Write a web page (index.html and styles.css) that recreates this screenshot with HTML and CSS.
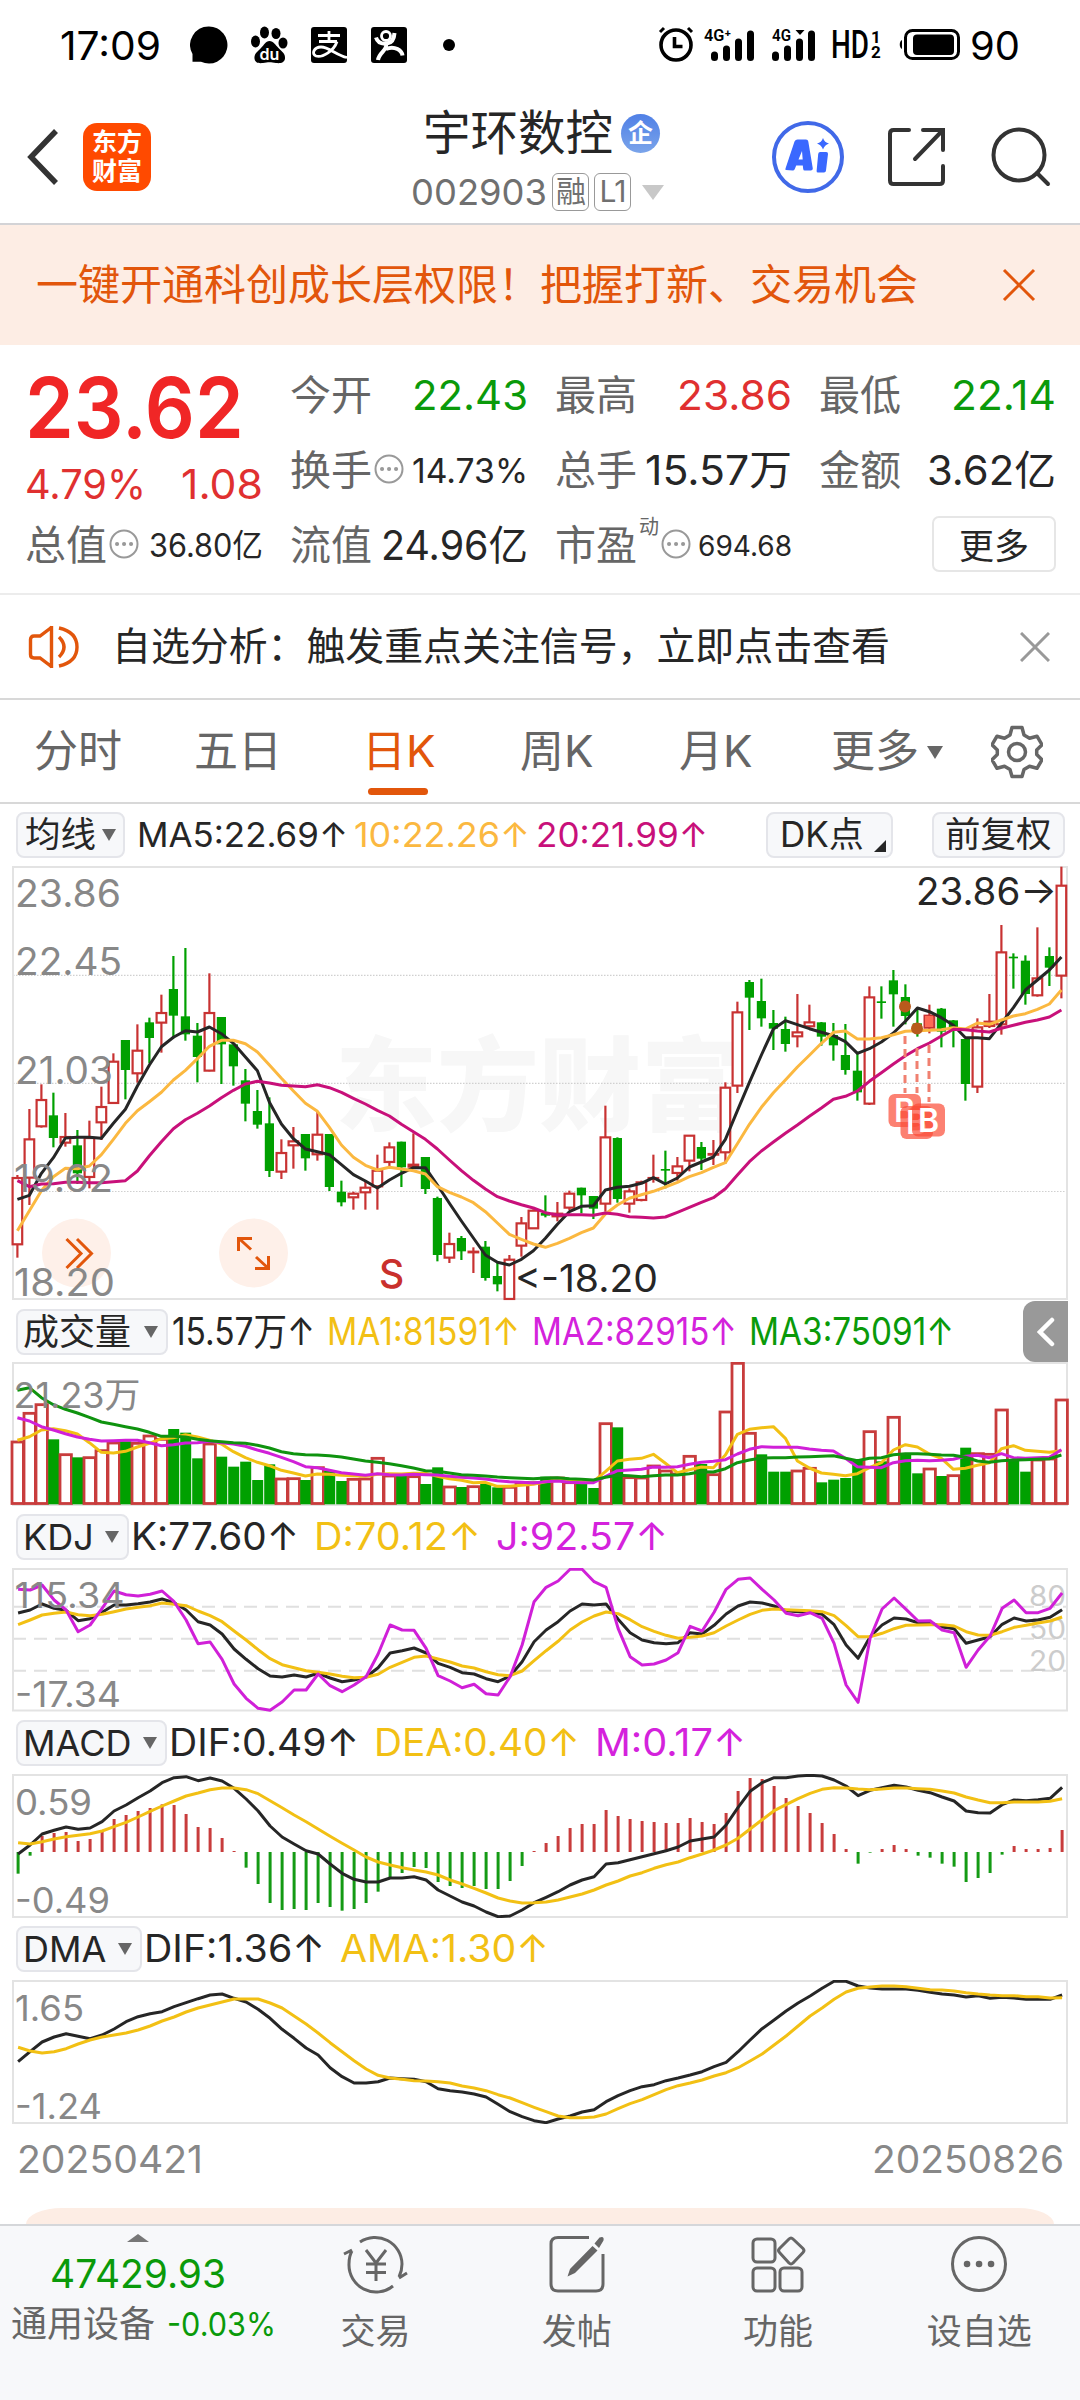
FILE: index.html
```html
<!DOCTYPE html>
<html lang="zh-CN">
<head>
<meta charset="utf-8">
<title>宇环数控 002903</title>
<link rel="stylesheet" href="styles.css">
</head>
<body>
<div class="status">
  <span class="status-time" data-fit="101">17:09</span>
  <div class="status-apps">
    <svg width="38" height="38" viewBox="0 0 38 38"><path d="M19 .5a18.5 18.5 0 1 1-8 35.200H2.500V28A18.500 18.500 0 0 1 19 .5z"/></svg>
    <svg width="38" height="38" viewBox="0 0 38 38"><ellipse cx="5.500" cy="15.500" rx="4.500" ry="6"/><ellipse cx="14.500" cy="6.500" rx="4.500" ry="6"/><ellipse cx="26" cy="7.500" rx="4.500" ry="5.500"/><ellipse cx="33" cy="17" rx="4.500" ry="5.500"/><path d="M19.500 15c4 0 6 4 9 7 4 4 7 6 6.500 10.500-.5 4.500-5 5-9 4.500-5-1-8-1-13 0-4 .5-8 0-8.500-4.500S7 26 11 22c3-3 4.500-7 8.500-7z"/><text class="paw-text" x="19.500" y="34" text-anchor="middle">du</text></svg>
    <svg width="38" height="38" viewBox="0 0 38 38"><rect x="1" y="1" width="36" height="36" rx="3"/><path class="knock" d="M8 9.500h22M19 5v10M9 15.500h18M27 15.500C24 25 12 32 6 30c-5-2-2-9 5-9 8 0 15 8 26 10.500"/></svg>
    <svg width="38" height="38" viewBox="0 0 38 38"><rect x="1" y="1" width="36" height="36" rx="3"/><circle class="knock" cx="16" cy="10" r="4.500"/><path class="knock wide" d="M6 11.500C8 18 13 18 17 17.500s7-3 7.500-10.500M16 18c2 6-7 8-8 16M16 23c9-4 16 2 16.500 6.500"/></svg>
  </div>
  <i class="status-dot"></i>
  <div class="status-right">
    <svg class="st-alarm" width="36" height="38" viewBox="0 0 36 38"><circle cx="18" cy="19" r="15"/><path d="M16.500 11v9.500h8"/><path class="thin" d="M2 6l4-4M34 6l-4-4"/></svg>
    <svg width="54" height="36" viewBox="0 0 54 36"><text class="net" x="0" y="14" textLength="27" lengthAdjust="spacingAndGlyphs">4G⁺</text><path class="bars" d="M10.500 28v2.500M22.500 22v8.500M34.500 15v15.500M46.500 7v23.500"/></svg>
    <svg width="48" height="36" viewBox="0 0 48 36"><text class="net" x="0" y="14" textLength="19" lengthAdjust="spacingAndGlyphs">4G</text><path class="bars" d="M3.500 28v2.500M15.500 22v8.500M27.500 15v15.500M39.500 7v23.500"/><path d="M23.500 3h9l-4.500 5z"/></svg>
    <span class="hd" data-fit="38">HD</span>
    <span class="hd-sub"><b>1</b><b>2</b></span>
    <svg class="st-battery" width="62" height="32" viewBox="0 0 62 32"><rect class="line" x="6.500" y="1.500" width="53" height="28" rx="7"/><rect x="14" y="5.500" width="41" height="20.500" rx="4"/><path d="M3 11v9C0 19 0 12 3 11z"/></svg>
    <span class="status-time" data-fit="50">90</span>
  </div>
</div>

<header class="head">
  <div class="head-left">
    <svg width="34" height="60" viewBox="0 0 34 60"><path d="M30 4L5 30l25 26" fill="none" stroke="#333" stroke-width="5.500"/></svg>
    <div class="logo"><span>东方</span><span>财富</span></div>
  </div>
  <div class="head-title">
    <div class="name">宇环数控<span class="qi">企</span></div>
    <div class="code"><span data-fit="136">002903</span><em>融</em><em>L1</em><svg width="22" height="15" viewBox="0 0 22 15"><path d="M0 0h22L11 15z" fill="#c8c8c8"/></svg></div>
  </div>
  <div class="head-right">
    <svg width="74" height="74" viewBox="0 0 74 74"><circle cx="37" cy="37" r="34" fill="none" stroke="#4169e8" stroke-width="4"/><path fill="#3a68ff" fill-rule="evenodd" d="M15 50q-1 0-.5-1.500l9-27q1-2 3-2h8.500q2 0 2.300 2l4.500 27q0 2-2 2h-6q-1.500 0-1.600-1.500l-.4-3.500h-6.600l-1.400 3.500q-.6 1.500-2 1.500zM27.500 39.500h4.200l-.7-8.500zM47 52.500q-1.500 0-1.400-1.500l1.600-17q.2-2 2-2h6q2 0 1.800 2l-2 16.500q-.2 2-2 2zM52 18q1.500 4.500 6 5.500-4.500 1.500-6 6-1.500-4.500-6-6 4.500-1 6-5.500z"/></svg>
    <svg width="60" height="60" viewBox="0 0 60 60"><path d="M22 3H6.500Q3 3 3 6.500v47Q3 57 6.500 57h46q3.500 0 3.500-3.500V39M36 3h20v20M55 4L28 32" fill="none" stroke="#333" stroke-width="4" stroke-linecap="round"/></svg>
    <svg width="62" height="62" viewBox="0 0 62 62"><circle cx="30" cy="29" r="25.500" fill="none" stroke="#333" stroke-width="4"/><path d="M48 47l11 11" stroke="#333" stroke-width="4" stroke-linecap="round"/></svg>
  </div>
</header>

<div class="banner"><span>一键开通科创成长层权限！把握打新、交易机会</span><svg width="34" height="34" viewBox="0 0 34 34"><path d="M2 2l30 30M32 2L2 32" stroke="#e2560b" stroke-width="3"/></svg></div>

<section class="quote">
  <div class="price">
    <span class="last" data-fit="222">23.62</span>
    <div class="chg"><span data-fit="121">4.79%</span><span data-fit="82">1.08</span></div>
  </div>
  <div class="cell"><label>今开</label><span class="green" data-fit="116">22.43</span></div>
  <div class="cell"><label>最高</label><span class="red" data-fit="115">23.86</span></div>
  <div class="cell"><label>最低</label><span class="green" data-fit="105">22.14</span></div>
  <div class="cell"><label>换手</label><svg class="tip" width="30" height="30" viewBox="0 0 30 30"><circle cx="15" cy="15" r="13.500"/><path d="M8 15h.1M15 15h.1M22 15h.1"/></svg><span class="mid" data-fit="116">14.73%</span></div>
  <div class="cell"><label>总手</label><span data-fit="147">15.57万</span></div>
  <div class="cell"><label>金额</label><span data-fit="129">3.62亿</span></div>
  <div class="cell"><label>总值</label><svg class="tip" width="30" height="30" viewBox="0 0 30 30"><circle cx="15" cy="15" r="13.500"/><path d="M8 15h.1M15 15h.1M22 15h.1"/></svg><span class="sm" data-fit="114">36.80亿</span></div>
  <div class="cell"><label>流值</label><span data-fit="147">24.96亿</span></div>
  <div class="cell"><label>市盈<sup>动</sup></label><svg class="tip" width="30" height="30" viewBox="0 0 30 30"><circle cx="15" cy="15" r="13.500"/><path d="M8 15h.1M15 15h.1M22 15h.1"/></svg><span class="xs" data-fit="94">694.68</span></div>
  <div class="cell end"><button class="more">更多</button></div>
</section>

<div class="alert">
  <svg width="52" height="46" viewBox="0 0 52 46"><path d="M23.500 2v42M24 3L12 12H6q-3.500 0-3.500 3.500v15Q2.500 34 6 34h6l12 9M31 13q10 10 0 20M31 4q18 4 18 19T31 42" fill="none" stroke="#e2560b" stroke-width="3.400"/></svg>
  <span>自选分析：触发重点关注信号，立即点击查看</span>
  <svg width="30" height="30" viewBox="0 0 30 30"><path d="M1 1l28 28M29 1L1 29" stroke="#999" stroke-width="3"/></svg>
</div>

<nav class="tabs">
  <span>分时</span><span>五日</span><span class="on">日K</span><span>周K</span><span>月K</span><span>更多<svg width="16" height="13" viewBox="0 0 16 13"><path d="M0 0h16L8 13z" fill="#666"/></svg></span>
  <svg width="52" height="54" viewBox="0 0 52 54"><path d="M21 2.500h10l2 7.500 5.500 3.200 7.500-2 5 8.500-5.300 5.300v4.500l5.300 5.300-5 8.500-7.500-2L33 44.500 31 51.500H21l-2-7-5.500-3.200-7.500 2-5-8.500L6.300 29.500V25L1 19.700l5-8.500 7.500 2L19 10z" fill="none" stroke="#666" stroke-width="3.500" stroke-linejoin="round"/><circle cx="26" cy="27" r="8.500" fill="none" stroke="#666" stroke-width="3.500"/></svg>
</nav>

<div class="ind ind-ma">
  <span class="pill">均线<i class="tri"></i></span>
  <span data-fit="211">MA5:22.69↑</span><span class="amber" data-fit="176">10:22.26↑</span><span class="rose" data-fit="172">20:21.99↑</span>
  <span class="pill dk">DK点<i class="corner"></i></span><span class="pill fq">前复权</span>
</div>
<svg class="chart" id="candle" width="1080" height="436" viewBox="0 865 1080 436"></svg>

<div class="ind ind-vol">
  <span class="pill">成交量<i class="tri"></i></span>
  <span data-fit="143">15.57万↑</span><span class="yellow" data-fit="193">MA1:81591↑</span><span class="purple" data-fit="205">MA2:82915↑</span><span class="green" data-fit="205">MA3:75091↑</span>
  <span class="fold"><svg width="18" height="30" viewBox="0 0 18 30"><path d="M15 3L3 15l12 12" fill="none" stroke="#fff" stroke-width="4.500" stroke-linecap="round"/></svg></span>
</div>
<svg class="chart" id="volume" width="1080" height="144" viewBox="0 1362 1080 144"></svg>

<div class="ind ind-kdj">
  <span class="pill">KDJ<i class="tri"></i></span>
  <span data-fit="168">K:77.60↑</span><span class="yellow" data-fit="167">D:70.12↑</span><span class="purple" data-fit="172">J:92.57↑</span>
</div>
<svg class="chart" id="kdj" width="1080" height="144" viewBox="0 1568 1080 144"></svg>

<div class="ind ind-macd">
  <span class="pill">MACD<i class="tri"></i></span>
  <span data-fit="190">DIF:0.49↑</span><span class="yellow" data-fit="206">DEA:0.40↑</span><span class="purple" data-fit="151">M:0.17↑</span>
</div>
<svg class="chart" id="macd" width="1080" height="144" viewBox="0 1774 1080 144"></svg>

<div class="ind ind-dma">
  <span class="pill">DMA<i class="tri"></i></span>
  <span data-fit="181">DIF:1.36↑</span><span class="yellow" data-fit="209">AMA:1.30↑</span>
</div>
<svg class="chart" id="dma" width="1080" height="144" viewBox="0 1980 1080 144"></svg>

<div class="dates"><span data-fit="186">20250421</span><span data-fit="192">20250826</span></div>
<div class="peek"></div>

<footer class="bottom">
  <div class="index">
    <svg width="22" height="8" viewBox="0 0 22 8"><path d="M0 8h22L11 0z" fill="#777"/></svg>
    <span class="green idx" data-fit="176">47429.93</span>
    <div class="sector">通用设备<span class="green" data-fit="109">-0.03%</span></div>
  </div>
  <div class="item"><svg width="70" height="62" viewBox="0 0 70 62"><path d="M19 9a27 27 0 0 1 42 22q0 7-3 13M52 53A27 27 0 0 1 8 31q0-8 3-13M11 17l-8 4M58 45l8-5M25 17l10 13 10-13M35 30v18M25 31h20M25 39.500h20" fill="none" stroke="#666" stroke-width="3"/></svg>交易</div>
  <div class="item"><svg width="58" height="62" viewBox="0 0 58 62"><path d="M41 4.500H10Q3 4.500 3 11v40q0 7 7 7h38q7 0 7-7V21" fill="none" stroke="#666" stroke-width="3"/><path d="M44.500 13l5 4.500L27 40l-7.500 3.500L22 36zM46.500 10.500l5-6q5-2 4 3L51 15z" fill="#666"/></svg>发帖</div>
  <div class="item"><svg width="58" height="62" viewBox="0 0 58 62"><g fill="none" stroke="#666" stroke-width="3"><rect x="4" y="6" width="22" height="23" rx="4"/><rect x="4" y="35" width="22" height="23" rx="4"/><rect x="31" y="35" width="22" height="23" rx="4"/><path d="M40 6q2-2 4 0l10 9.500q2 2 0 4L44 30q-2 2-4 0L30.500 19.500q-2-2 0-4z"/></g></svg>功能</div>
  <div class="item"><svg width="58" height="62" viewBox="0 0 58 62"><circle cx="29" cy="31" r="26.500" fill="none" stroke="#666" stroke-width="3"/><path d="M17 31h.1M29 31h.1M41 31h.1" stroke="#666" stroke-width="6.500" stroke-linecap="round"/></svg>设自选</div>
</footer>
<script src="chart.js"></script>
</body>
</html>
```
FILE: styles.css
```css
* { box-sizing: border-box; }
body {
  margin: 0;
  width: 1080px;
  height: 2400px;
  overflow: hidden;
  background: #fff;
  color: #262626;
  font-family: Inter, "Noto Sans CJK SC", sans-serif;
  font-size: 38px;
  line-height: 1;
}
svg { display: block; flex: none; }
[data-fit] { display: inline-block; white-space: nowrap; transform-origin: 0 50%; flex: none; }
.green { color: #0a9a0a; }
.red { color: #e03030; }
.amber { color: #fbb840; }
.rose { color: #c8107a; }
.yellow { color: #f2c014; }
.purple { color: #d422dc; }

.status { display: flex; align-items: center; height: 90px; padding-left: 60px; color: #000; }
.status-time { font-size: 39px; }
.status-apps { display: flex; gap: 22px; margin-left: 29px; }
.paw-text { font: 600 16px Inter, sans-serif; fill: #fff; }
.knock { fill: none; stroke: #fff; stroke-width: 2.8; }
.knock.wide { stroke-width: 4; }
.status-dot { width: 12px; height: 12px; border-radius: 50%; background: #000; margin-left: 35px; }
.status-right { display: flex; align-items: center; margin-left: 203px; }
.st-alarm { fill: none; stroke: #000; stroke-width: 3.6; margin-right: 10px; }
.st-alarm .thin { stroke-width: 3; }
.net { font: 600 16px "Roboto", sans-serif; fill: #000; }
.bars { fill: none; stroke: #000; stroke-width: 7; stroke-linecap: round; }
.status-right svg + svg + svg { margin-left: 14px; }
.hd { font: 500 38px Roboto, sans-serif; margin-left: 11px; }
.hd-sub { display: flex; flex-direction: column; font: 700 17px/15px Roboto, sans-serif; width: 10px; margin-left: 2px; }
.hd-sub b { font-weight: 700; }
.st-battery { margin: 0 0 0 18px !important; }
.st-battery .line { fill: none; stroke: #000; stroke-width: 3; }
.st-battery + .status-time { margin-left: 9px; }

.head { display: grid; grid-template-columns: 400px 280px 400px; height: 135px; border-bottom: 2px solid #d3d3d6; }
.head-left { display: flex; align-items: center; padding-left: 26px; gap: 23px; }
.logo { width: 68px; height: 68px; border-radius: 14px; background: #ff4a00; color: #fff; display: flex; flex-direction: column; align-items: center; justify-content: center; font-size: 25px; line-height: 29px; font-weight: 700; }
.head-title { display: flex; flex-direction: column; padding-top: 18px; }
.name { display: flex; align-items: center; font-size: 47.500px; line-height: 50px; padding-left: 23px; white-space: nowrap; }
.qi { width: 39px; height: 39px; border-radius: 50%; background: linear-gradient(#5080e6, #7aa4ea); color: #fff; font-size: 25px; line-height: 38px; text-align: center; font-weight: 700; margin-left: 8px; }
.code { display: flex; align-items: center; height: 38px; margin-top: 15px; padding-left: 11px; font-size: 36px; color: #707070; }
.code em { width: 37px; height: 38px; border: 1.500px solid #999; border-radius: 6px; font-style: normal; font-size: 30px; line-height: 34px; text-align: center; margin-left: 5px; letter-spacing: -1px; }
.code svg { margin-left: 11px; }
.head-right { display: flex; align-items: center; padding-left: 91px; gap: 42px; }

.banner { display: flex; align-items: center; justify-content: space-between; height: 120px; padding: 0 44px 0 36px; background: #fdede4; color: #e2560b; font-size: 42px; }

.quote { display: grid; grid-template-columns: 238px 238px 237px 237px; grid-auto-rows: 75px; column-gap: 27px; padding: 13px 24px 11px 25px; height: 250px; border-bottom: 2px solid #ececec; }
.price { grid-row: span 2; color: #f02626; display: flex; flex-direction: column; }
.last { font-size: 84px; font-weight: 600; height: 99px; line-height: 99px; }
.chg { display: flex; justify-content: space-between; font-size: 41px; line-height: 54px; color: #e03030; }
.cell { display: flex; align-items: center; font-size: 41px; }
.cell label { position: relative; font-size: 41px; color: #666; white-space: nowrap; }
.cell label sup { position: absolute; left: 84px; top: -8px; font-size: 20px; line-height: 20px; }
.cell > span { margin-left: auto; }
.cell .mid { font-size: 34px; }
.cell .sm { font-size: 32px; }
.cell .xs { font-size: 28px; }
.tip { fill: none; stroke: #999; stroke-width: 2; margin: -4px 0 0 2px; }
.tip path { stroke-width: 4; stroke-linecap: round; }
label:has(sup) + .tip { margin-left: 24px; }
.cell.end { justify-content: flex-end; padding-bottom: 4px; }
.more { width: 124px; height: 56px; border: 2px solid #e6e6e6; border-radius: 7px; background: #fff; color: #262626; font: 35px "Noto Sans CJK SC", sans-serif; line-height: 50px; padding: 0; }

.alert { display: flex; align-items: center; height: 105px; padding: 0 30px 0 28px; border-bottom: 2px solid #d8d8d8; font-size: 38.900px; }
.alert span { margin: 0 auto 0 32px; }

.tabs { display: grid; grid-template-columns: 160px 172px 154px 159px 152px 160px auto; align-items: center; height: 104px; padding-left: 34px; border-bottom: 2px solid #d8d8d8; font-size: 44px; color: #666; }
.tabs span { position: relative; white-space: nowrap; line-height: 103px; }
.tabs span svg { display: inline-block; margin: 0 0 8px 8px; }
.tabs .on { color: #e2560b; margin-left: -4px; }
.tabs .on::after { content: ""; position: absolute; left: 6px; bottom: 8px; width: 60px; height: 7px; border-radius: 4px; background: #e2560b; }

.ind { display: flex; align-items: center; padding-left: 16px; gap: 15px; }
.ind-ma { height: 61px; gap: 6px; font-size: 34px; }
.ind-vol { height: 61px; gap: 12px; font-size: 37.500px; }
.ind-kdj, .ind-macd, .ind-dma { height: 62px; font-size: 37.500px; }
.pill { flex: none; display: flex; align-items: center; height: 46px; border: 2px solid #e4e5ea; border-radius: 8px; background: #f7f8fa; font-size: 36px; padding-left: 5px; white-space: nowrap; }
.tri { border: 7.500px solid transparent; border-top: 12px solid #666; border-bottom: 0; margin-left: auto; margin-right: 8px; }
.ind-ma .pill { width: 109px; margin-right: 6px; font-size: 35.500px; padding-left: 7px; }
.ind-ma .tri { margin-right: 7px; }
.ind-ma .dk { position: relative; width: 127px; margin: 0 0 0 52px; padding-left: 12px; font-size: 35px; }
.corner { position: absolute; right: 5px; bottom: 4px; border-left: 12px solid transparent; border-bottom: 12px solid #262626; }
.ind-ma .fq { width: 133px; margin: 0 0 0 33px; padding-left: 11px; }
.ind-vol .pill { width: 152px; margin-right: -8px; }
.ind-kdj .pill { width: 113px; margin-right: -13px; }
.ind-macd .pill { width: 151px; margin-right: -13px; }
.ind-dma .pill { width: 126px; margin-right: -13px; }
.fold { width: 45px; height: 61px; margin: 0 12px 0 auto; border-radius: 12px 0 0 12px; background: #999; display: flex; align-items: center; justify-content: center; }

.chart { font-family: Inter, "Noto Sans CJK SC", sans-serif; font-size: 35px; }
.frame { fill: none; stroke: #e3e3e3; stroke-width: 2; }
.dots { stroke: #d0d0d0; stroke-width: 1.200; stroke-dasharray: 1.500 1.500; }
.dash { stroke: #e0e0e0; stroke-width: 2; stroke-dasharray: 13 8; }
.plot { fill: none; stroke-width: 3; stroke-linejoin: round; }
.up { fill: #fff; stroke: #c83232; stroke-width: 2.200; }
.down { fill: #00a000; stroke: none; }
.wick-up { stroke: #c83232; stroke-width: 2.200; }
.wick-down { stroke: #00a000; stroke-width: 2.200; }
.vol-up { fill: #fff; stroke: #c83c3c; stroke-width: 2.800; }
.hist-up { stroke: #c83c3c; stroke-width: 3; }
.hist-down { stroke: #149a14; stroke-width: 3; }
.scale { fill: #888; }
.scale.big { font-size: 38px; }
.level { fill: #ccc; font-size: 28px; }
.ink { fill: #262626; font-size: 38px; }
.mark { fill: none; stroke: #f08070; stroke-width: 3; stroke-dasharray: 8 5; }
.badge { fill: #fb4b36; fill-opacity: .7; }
.badge-text { fill: #fff; font-size: 32px; font-weight: 600; }
.sell { fill: #c9302c; font-size: 39px; font-weight: 500; }
.watermark { fill: #f7f7f7; font-size: 102px; font-weight: 900; }
.round { fill: #fef0e9; }
.round-icon { fill: none; stroke: #e2560b; stroke-width: 3; }

.dates { display: flex; justify-content: space-between; padding: 15px 16px 0 17px; height: 84px; line-height: 38px; color: #888; }
.dates span { height: 40px; line-height: 40px; }
.peek { margin: 0 26px; height: 16px; background: #fdede4; border-radius: 36px 36px 0 0 / 16px 16px 0 0; }

.bottom { display: flex; height: 176px; border-top: 2px solid #d5d7da; background: #f7f8fa; color: #666; font-size: 35px; }
.index { width: 275px; display: flex; flex-direction: column; align-items: center; padding-top: 8px; }
.idx { font-size: 39px; height: 39px; line-height: 39px; margin-top: 12px; }
.sector { align-self: flex-start; display: flex; align-items: center; height: 40px; margin: 11px 0 0 11px; font-size: 36px; white-space: nowrap; }
.sector span { font-size: 33px; margin-left: 12px; }
.item { width: 201.300px; display: flex; flex-direction: column; align-items: center; padding-top: 7px; line-height: 40px; }
.item svg { margin-bottom: 16px; }
```
FILE: chart.js
```js
// Squeeze or stretch numeric labels into the slot width given by data-fit.
document.querySelectorAll('[data-fit]').forEach(function (el) {
  var slot = +el.dataset.fit, natural = el.getBoundingClientRect().width;
  el.style.width = slot + 'px';
  el.style.transform = 'scaleX(' + slot / natural + ')';
});

// Samples are stored in thirds of a pixel below the panel origin.
var STEP = 12.0, X0 = 17.4;
function X(i) { return X0 + i * STEP; }
function Y(origin, v) { return origin + v / 3; }
function nums(s) { return s.trim().split(/[\s,]+/).map(Number); }
function tag(name, attrs, text) {
  var s = '<' + name;
  for (var k in attrs) s += ' ' + k + '="' + attrs[k] + '"';
  return s + '>' + (text || '') + '</' + name + '>';
}
function plot(origin, s, color, dx) {
  var pts = nums(s).map(function (v, i) { return (X(i) + (dx || 0)).toFixed(1) + ',' + Y(origin, v).toFixed(1); });
  return tag('polyline', { 'class': 'plot', stroke: color, points: pts.join(' ') });
}
function frame(top, bottom) { return tag('rect', { 'class': 'frame', x: 13, y: top, width: 1054, height: bottom - top }); }
function hline(y, cls) { return tag('path', { 'class': cls, d: 'M13 ' + y + 'H1067' }); }
function label(x, y, len, text, cls) {
  return tag('text', { 'class': cls, x: x, y: y, textLength: len, lengthAdjust: 'spacingAndGlyphs' }, text);
}
function draw(id, parts) { document.getElementById(id).innerHTML = parts.join(''); }

var INK = '#262626', AMBER = '#fbb840', ROSE = '#c8107a', YELLOW = '#f2c014', PURPLE = '#d020d8', GREEN = '#0f930f';

// direction, high, body top, body bottom, low
var candles = 'r945,952,1155,1193 r747,836,955,1035 r673,718,801,803 g698,766,834,862 r759,829,850,860 g810,856,940,972 r782,832,953,985 r680,739,789,840 r580,603,731,731 g540,540,630,718 r493,570,642,668 g473,487,534,610 r404,457,490,578 g288,387,467,535 g264,469,523,542 g489,527,591,667 r340,457,634,634 g471,471,553,672 g553,553,619,677 g627,661,731,784 g690,753,794,806 g712,790,933,951 r838,877,937,957 r801,842,858,926 g822,822,895,932 r755,822,885,902 g822,822,981,993 g962,995,1027,1039 r995,999,1014,1049 r965,981,999,1049 r884,930,981,1049 r847,860,908,920 g845,845,922,981 r820,912,922,924 g891,891,987,1002 g1010,1014,1185,1204 r1118,1150,1195,1209 g1128,1134,1174,1200 r1162,1173,1179,1239 g1143,1160,1254,1262 g1208,1248,1273,1294 r1185,1197,1319,1319 r1071,1088,1159,1190 r1048,1050,1107,1107 g1006,1059,1067,1072 r1026,1059,1071,1084 r992,999,1045,1050 g983,983,1006,1060 g1008,1008,1046,1077 r737,830,1033,1055 g832,834,1017,1028 r985,992,1033,1058 r962,965,1022,1024 r884,952,958,968 g872,927,932,985 r891,917,941,962 r825,825,904,934 g846,861,896,930 r840,880,884,915 r667,681,879,911 r425,455,679,699 g360,366,413,510 g356,423,475,500 g450,489,506,570 g470,507,552,575 r402,515,531,562 r434,485,501,503 g486,487,530,557 g489,525,556,602 g492,585,630,644 g575,632,697,722 r379,410,733,735 g379,424,429,476 g330,361,403,500 g373,411,468,493 g445,490,505,530 r434,465,505,520 g444,446,515,562 g480,481,501,562 g537,537,672,722 r475,500,682,699 r402,483,500,504 r195,275,495,524 g280,290,295,386 g286,302,402,434 r202,353,408,410 g262,288,323,378 r20,75,349,415'.split(' ');

var body = candles.map(function (c, i) {
  var v = nums(c.slice(1)), x = X(i), red = c[0] === 'r', y = v.map(function (n) { return Y(860, n); });
  var wick = tag('path', { 'class': red ? 'wick-up' : 'wick-down', d: 'M' + x + ' ' + y[0] + 'V' + y[3] });
  var box = red
    ? tag('rect', { 'class': 'up', x: x - 4.8, y: y[1] + .7, width: 9.6, height: Math.max(.6, y[2] - y[1] - 1.4) })
    : tag('rect', { 'class': 'down', x: x - 4.6, y: y[1], width: 9.2, height: y[2] - y[1] });
  return wick + box;
}).join('');

draw('candle', [
  tag('text', { 'class': 'watermark', x: 335, y: 1123 }, '东方财富'),
  hline(975.3, 'dots'), hline(1083.3, 'dots'), hline(1191.5, 'dots'), frame(867, 1299),
  tag('circle', { 'class': 'round', cx: 76.500, cy: 1253, r: 34.500 }), tag('circle', { 'class': 'round', cx: 253.500, cy: 1253, r: 34.500 }),
  body,
  plot(860, '1018 1006 940 893 834 832 832 835 790 748 678 615 560 532 512 516 501 521 550 591 632 727 792 836 867 875 884 914 944 963 984 960 940 923 923 975 1030 1083 1134 1185 1207 1215 1198 1172 1135 1093 1055 1039 1037 990 982 979 970 953 972 954 921 906 891 838 752 667 585 507 482 494 506 517 527 545 580 566 546 519 484 444 455 473 496 533 533 536 490 443 390 360 330 291', INK),
  plot(860, '1112 1052 992 950 925 926 918 884 838 790 752 725 697 660 631 596 559 541 541 551 576 615 655 693 730 754 802 855 892 916 930 922 927 932 942 980 997 1011 1028 1055 1089 1123 1138 1152 1162 1150 1135 1118 1104 1062 1035 1015 1004 994 981 967 950 938 922 908 851 793 742 698 660 621 586 550 517 513 537 537 533 524 514 512 511 509 503 507 489 493 480 468 461 448 432 390', AMBER),
  plot(860, '962 980 972 971 967 967 968 968 965 962 933 887 845 806 779 760 738 713 691 672 664 669 676 678 680 674 683 697 715 732 751 768 793 815 838 867 900 932 961 987 1010 1023 1034 1044 1058 1065 1064 1064 1066 1059 1063 1070 1072 1074 1071 1057 1042 1027 1013 986 945 905 873 846 820 795 769 744 718 709 693 664 638 612 587 566 549 528 508 509 513 516 505 496 487 480 471 450', ROSE),
  tag('circle', { cx: 905, cy: 1006.500, r: 6, fill: '#b85a1c' }), tag('circle', { cx: 917, cy: 1028.500, r: 6, fill: '#b85a1c' }),
  tag('rect', { x: 925, y: 1016, width: 8, height: 11, fill: '#ff6a55' }),
  tag('path', { 'class': 'mark', d: 'M905 1036V1093M917 1048V1093M929 1045V1102' }),
  tag('rect', { 'class': 'badge', x: 888.500, y: 1094, width: 32.500, height: 33, rx: 6 }), tag('text', { 'class': 'badge-text', x: 894, y: 1122 }, 'B'),
  tag('rect', { 'class': 'badge', x: 900.500, y: 1106, width: 32.500, height: 33, rx: 6 }), tag('text', { 'class': 'badge-text', x: 906, y: 1134 }, 'B'),
  tag('rect', { 'class': 'badge', x: 912, y: 1103.500, width: 33, height: 33, rx: 6 }), tag('text', { 'class': 'badge-text', x: 918, y: 1132 }, 'B'),
  tag('path', { 'class': 'round-icon', d: 'M66.500 1239L81 1253.500 66.500 1268M77 1239L91.500 1253.500 77 1268M251 1249.500L239 1238.500M238.500 1251V1238.500H252M256 1257L268 1268M268.500 1256V1268.500H255' }),
  label(15, 906.500, 106, '23.86', 'scale big'), label(15, 975, 107, '22.45', 'scale big'), label(15, 1083.700, 98, '21.03', 'scale big'),
  label(14, 1191.700, 99, '19.62', 'scale big'), label(14, 1295.700, 101, '18.20', 'scale big'),
  tag('text', { 'class': 'sell', x: 379, y: 1288 }, 'S'),
  label(515, 1292.300, 143, '&lt;-18.20', 'ink'), label(916, 904.500, 141, '23.86→', 'ink')
]);

var vols = 'r426 r340 r314 g418 r464 g472 r473 r452 r429 g424 r430 r408 r418 g387 g398 g475 r432 g470 g500 g485 g540 g493 r537 r536 g540 r503 g513 g543 r538 r537 r475 r528 g527 r530 g552 g502 r561 g561 r560 g551 g562 r562 r548 r548 g530 r534 r548 g550 g564 r371 g382 r533 r534 r498 r513 r522 r469 g492 r524 r336 r190 r400 g463 g515 g515 r513 r505 g547 g539 g534 g477 r395 g484 r352 g461 g520 r507 g528 r527 g443 r461 r463 r330 g477 g515 r480 r477 r300'.split(' ');
draw('volume', [
  frame(1363, 1505),
  vols.map(function (c, i) {
    var y = Y(1300, +c.slice(1)), x = X(i) + .3;
    return c[0] === 'r'
      ? tag('rect', { 'class': 'vol-up', x: x - 5.7, y: y, width: 11.4, height: 1503.5 - y })
      : tag('rect', { 'class': 'down', x: x - 5.5, y: y, width: 11, height: 1504.3 - y });
  }).join(''),
  plot(1300, '421 410 390 386 392 402 428 457 459 454 441 430 416 413 404 411 421 432 455 473 487 497 511 519 528 522 523 526 527 529 523 521 522 520 520 529 536 541 548 547 559 559 556 553 545 541 543 545 544 515 483 478 475 463 490 518 509 501 503 465 403 388 383 380 415 483 504 519 523 527 521 503 488 450 434 441 462 475 508 505 496 488 446 437 451 454 457 452', YELLOW),
  plot(1300, '353 363 380 390 401 411 418 423 422 421 421 428 437 434 429 428 424 428 432 439 450 460 472 485 500 503 511 518 522 526 521 524 525 523 524 525 529 532 534 537 542 545 547 549 545 543 547 548 548 530 512 510 508 501 502 500 493 487 484 479 462 448 440 442 442 442 447 451 453 475 500 502 503 488 482 481 482 481 478 469 466 473 461 473 475 473 472 449', PURPLE),
  plot(1300, '271 263 293 314 328 339 352 366 373 380 387 397 409 409 411 418 422 425 428 430 436 444 455 461 464 465 467 471 477 483 487 491 497 504 512 514 519 524 526 528 531 533 535 536 534 533 536 538 540 532 526 527 530 527 525 525 521 515 516 506 488 480 474 473 473 471 470 469 467 475 482 475 473 464 461 461 463 465 466 472 483 487 482 480 479 478 476 465', GREEN),
  label(13.500, 1407.700, 127, '21.23万', 'scale')
]);

draw('kdj', [
  hline(1606.700, 'dash'), hline(1638.700, 'dash'), hline(1670.700, 'dash'), frame(1569, 1710.500),
  label(1029, 1606, 37, '80', 'level'), label(1029, 1638.500, 37, '50', 'level'), label(1029, 1671, 37, '20', 'level'),
  plot(1300, '939 930 912 925 931 962 956 937 915 915 911 906 897 908 930 965 975 1002 1047 1078 1106 1128 1131 1125 1131 1120 1134 1145 1140 1131 1103 1059 1052 1044 1059 1090 1102 1118 1122 1136 1145 1128 1085 1025 990 965 933 912 915 912 958 998 1020 1028 1031 1028 998 1002 976 942 918 906 909 918 932 935 937 943 974 1035 1075 1010 975 954 957 968 968 981 986 1030 1020 1010 973 954 963 960 952 929', INK, .7),
  plot(1300, '974 960 945 940 936 944 947 943 935 927 922 917 909 913 917 933 947 965 993 1020 1049 1076 1094 1103 1112 1117 1122 1129 1133 1132 1123 1102 1087 1072 1068 1077 1086 1098 1104 1115 1124 1127 1113 1082 1052 1024 990 966 948 936 941 959 980 994 1006 1015 1012 1008 998 978 960 943 931 927 929 931 932 935 947 977 1010 1010 1000 986 976 975 974 974 978 995 1005 1006 995 982 976 969 963 951', YELLOW, .7),
  plot(1300, '868 870 855 900 930 995 975 925 873 884 888 883 873 905 960 1031 1026 1078 1152 1195 1225 1231 1206 1170 1170 1122 1157 1175 1155 1130 1062 975 990 991 1045 1127 1143 1163 1153 1181 1185 1130 1035 905 862 843 808 808 845 862 985 1070 1095 1092 1080 1058 979 993 937 868 838 834 868 900 940 947 938 955 1030 1155 1207 1015 927 894 928 963 962 990 998 1102 1050 1008 925 900 938 938 925 879', PURPLE, .7),
  label(14.500, 1608, 110, '115.34', 'scale'), label(15, 1706.700, 106, '-17.34', 'scale')
]);

draw('macd', [
  frame(1775, 1917),
  nums('491 437 378 369 366 393 387 366 327 315 303 294 283 285 312 351 354 384 423 473 522 579 600 597 600 579 591 602 597 579 545 506 489 471 474 516 528 534 528 537 537 513 468 423 399 378 354 342 342 300 318 327 333 336 339 339 324 336 342 309 243 204 207 228 264 288 309 339 372 417 461 428 417 405 417 437 443 461 470 516 504 489 434 408 417 417 414 360').map(function (v, i) {
    return tag('path', { 'class': v < 426 ? 'hist-up' : 'hist-down', d: 'M' + (X(i) + .7) + ' 1852V' + Y(1710, v) });
  }).join(''),
  plot(1710, '432 405 372 361 351 358 354 335 303 285 263 243 218 203 200 212 204 213 235 267 303 348 381 402 422 432 462 490 508 516 516 504 504 500 510 540 558 576 588 606 620 618 600 578 562 545 525 510 500 462 458 449 440 431 422 411 393 387 381 345 292 244 218 203 203 198 196 198 210 228 257 241 233 226 231 241 248 261 273 303 308 309 284 270 272 269 265 232', INK, .7),
  plot(1710, '398 402 395 387 380 376 371 363 350 337 321 304 288 273 258 249 239 234 234 239 251 272 293 315 335 357 379 400 420 441 456 465 473 480 486 495 510 522 535 549 564 573 579 578 576 570 561 552 540 525 513 498 488 475 464 456 443 432 420 405 385 357 329 302 284 266 250 238 233 234 237 239 237 234 234 236 238 243 249 261 270 278 278 276 276 276 274 266', YELLOW, .7),
  label(15, 1815, 77, '0.59', 'scale'), label(15, 1912.700, 95, '-0.49', 'scale')
]);

draw('dma', [
  frame(1981, 2123),
  plot(1710, '1055 1025 996 981 971 979 986 975 957 935 920 911 905 890 878 866 855 852 865 876 898 925 958 985 1014 1035 1073 1100 1119 1119 1115 1104 1106 1108 1115 1136 1142 1146 1152 1161 1183 1205 1220 1232 1238 1227 1218 1206 1199 1175 1157 1142 1130 1124 1112 1104 1095 1085 1070 1057 1025 990 956 930 903 879 858 835 814 814 828 834 837 837 837 841 847 852 855 861 857 865 862 864 868 868 868 855', INK, .7),
  plot(1710, '1012 1023 1029 1025 1016 1002 990 981 975 969 960 948 933 921 906 894 885 876 867 867 867 879 894 918 942 969 998 1025 1052 1077 1096 1104 1108 1112 1113 1115 1119 1128 1134 1142 1154 1164 1178 1192 1205 1218 1223 1223 1221 1212 1196 1181 1169 1154 1139 1127 1119 1110 1098 1088 1073 1053 1032 1005 978 948 918 894 868 846 835 831 828 828 830 835 839 840 843 848 852 855 857 857 860 860 864 863', YELLOW, .7),
  label(15, 2021, 69, '1.65', 'scale'), label(15, 2118.700, 87, '-1.24', 'scale')
]);
```
